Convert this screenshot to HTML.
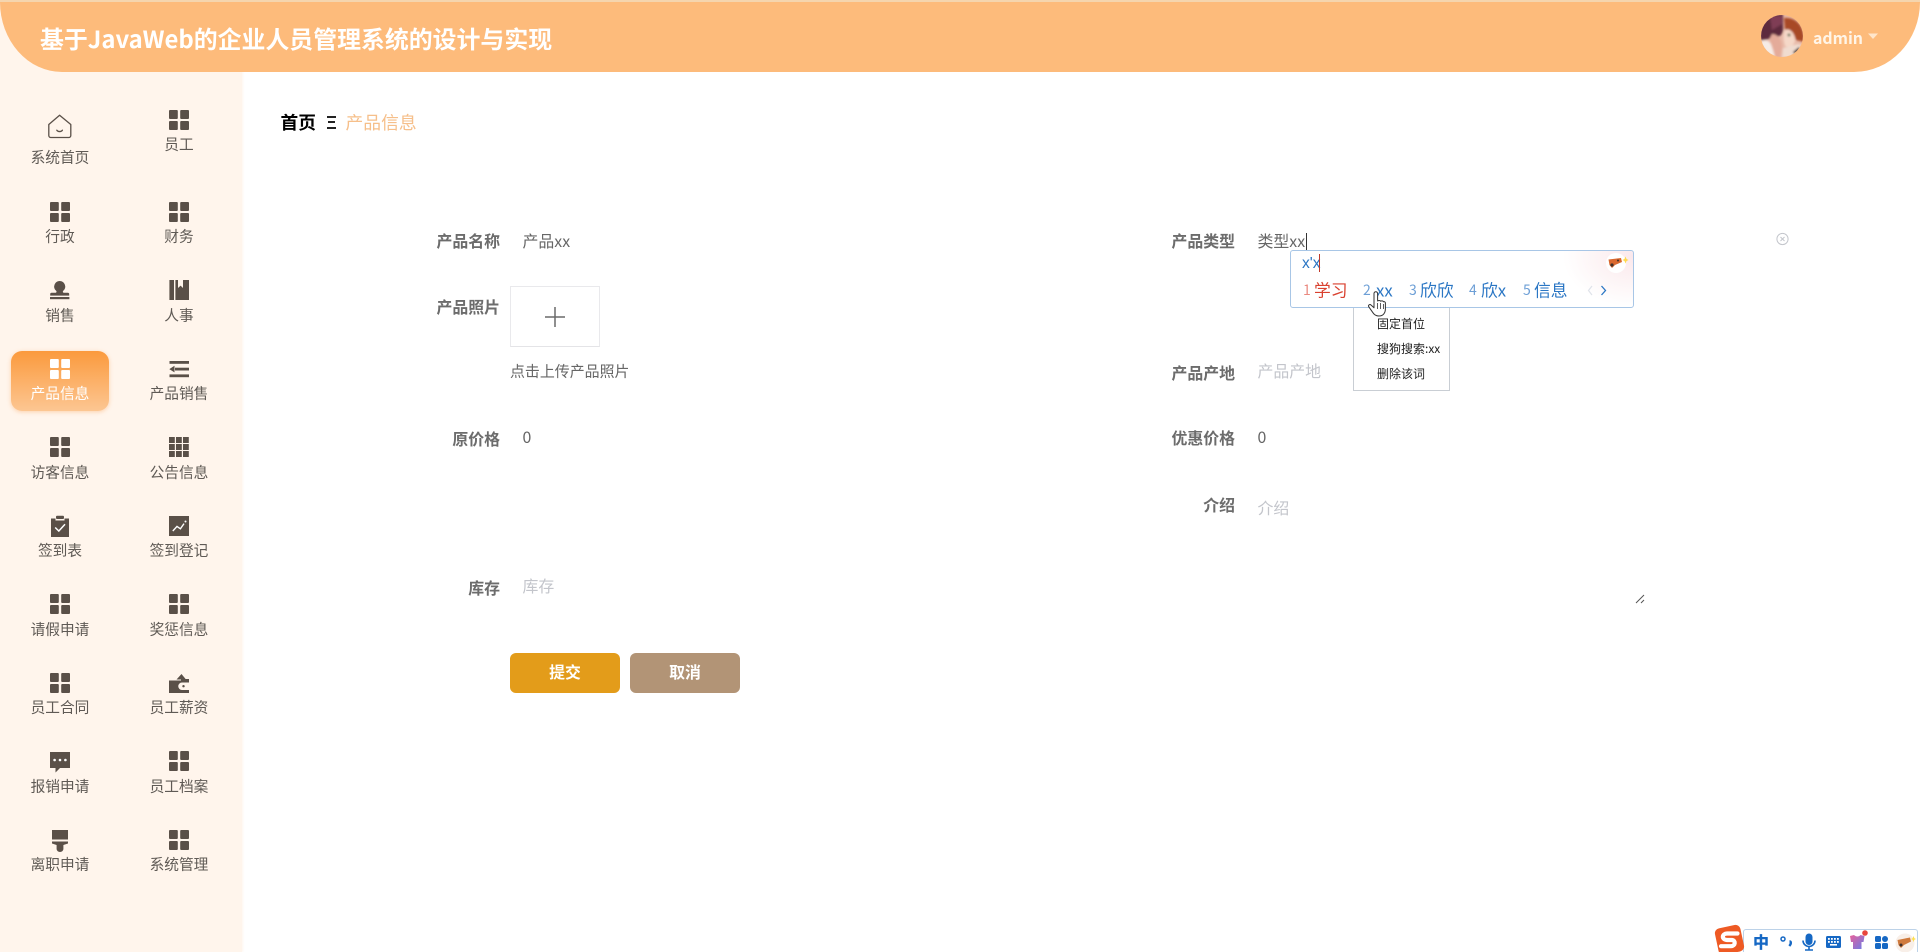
<!DOCTYPE html>
<html lang="zh-CN">
<head>
<meta charset="utf-8">
<title>产品信息</title>
<style>
html,body{margin:0;padding:0;width:1920px;height:952px;overflow:hidden;background:#fff}
body{font-family:"Noto Sans CJK SC","Liberation Sans",sans-serif}
#root{position:relative;width:1920px;height:952px;overflow:hidden;background:#fff;filter:blur(.35px)}
#root div,#root span.a{position:absolute}
.t{white-space:nowrap;line-height:1;transform:translateY(-50%)}
.c{white-space:nowrap;line-height:1;transform:translate(-50%,-50%);font-size:14.7px;color:#5f5a55}
.r{white-space:nowrap;line-height:1;transform:translateY(-50%);right:1420px;font-size:15.9px;font-weight:700;color:#6c6c6c;text-align:right}
.r2{right:685px}
.v{font-size:15.9px;color:#666}
.p{font-size:15.9px;color:#c3c5cb}
.im{font-size:16.8px;color:#2a76c4;font-family:"Noto Sans CJK SC","Liberation Sans",sans-serif}
.n{font-size:14px;color:#6d9fd6}
.m{font-size:12px;color:#222}
svg{position:absolute;left:0;top:0}
</style>
</head>
<body>
<div id="root">
  <!-- sidebar -->
  <div style="left:0;top:0;width:242px;height:952px;background:#fff5ec;box-shadow:1px 0 2px rgba(255,240,226,.6)"></div>
  <!-- header -->
  <div style="left:0;top:0;width:1920px;height:3px;background:#f5d5ae"></div>
  <div style="left:0;top:2px;width:1920px;height:70px;background:#fdbb7b;border-radius:0 0 66px 62px / 0 0 70px 70px"></div>
  <div class="t" style="left:40px;top:37.5px;font-size:23.9px;font-weight:700;color:#fff">基于JavaWeb的企业人员管理系统的设计与实现</div>
  <div class="t" style="left:1813px;top:38px;font-size:15.9px;font-weight:700;color:#fff5e8">admin</div>

  <!-- active menu -->
  <div style="left:11px;top:351px;width:98px;height:60px;border-radius:11px;background:linear-gradient(180deg,#fb9a3d 0%,#fcc692 100%);box-shadow:0 1px 4px rgba(250,165,90,.45)"></div>

  <!-- menu labels -->
  <div class="c" style="left:60px;top:158px">系统首页</div>
  <div class="c" style="left:179px;top:145px">员工</div>
  <div class="c" style="left:60px;top:237px">行政</div>
  <div class="c" style="left:179px;top:237px">财务</div>
  <div class="c" style="left:60px;top:315.5px">销售</div>
  <div class="c" style="left:179px;top:315.5px">人事</div>
  <div class="c" style="left:60px;top:394px;color:#fff">产品信息</div>
  <div class="c" style="left:179px;top:394px">产品销售</div>
  <div class="c" style="left:60px;top:472.5px">访客信息</div>
  <div class="c" style="left:179px;top:472.5px">公告信息</div>
  <div class="c" style="left:60px;top:551px">签到表</div>
  <div class="c" style="left:179px;top:551px">签到登记</div>
  <div class="c" style="left:60px;top:629.5px">请假申请</div>
  <div class="c" style="left:179px;top:629.5px">奖惩信息</div>
  <div class="c" style="left:60px;top:708px">员工合同</div>
  <div class="c" style="left:179px;top:708px">员工薪资</div>
  <div class="c" style="left:60px;top:786.5px">报销申请</div>
  <div class="c" style="left:179px;top:786.5px">员工档案</div>
  <div class="c" style="left:60px;top:865px">离职申请</div>
  <div class="c" style="left:179px;top:865px">系统管理</div>

  <!-- breadcrumb -->
  <div class="t" style="left:280.5px;top:123px;font-size:17.7px;font-weight:700;color:#000">首页</div>
  <div style="left:327px;top:116px;width:9px;height:2px;background:#222"></div>
  <div style="left:328px;top:121px;width:7px;height:2px;background:#222"></div>
  <div style="left:327px;top:127px;width:9px;height:2px;background:#222"></div>
  <div class="t" style="left:345.5px;top:123px;font-size:17.8px;color:#f6bf8a">产品信息</div>

  <!-- form left -->
  <div class="r" style="top:241px">产品名称</div>
  <div class="t v" style="left:522.5px;top:241px">产品xx</div>
  <div class="r" style="top:307px">产品照片</div>
  <div style="left:510px;top:286px;width:88px;height:59px;border:1px solid #e9e9ec;border-bottom-color:#e4e4e7;box-sizing:content-box"></div>
  <div class="t" style="left:510px;top:372px;font-size:14.95px;color:#666">点击上传产品照片</div>
  <div class="r" style="top:439px">原价格</div>
  <div class="t v" style="left:522.5px;top:437px">0</div>
  <div class="r" style="top:588px">库存</div>
  <div class="t p" style="left:522.5px;top:586px">库存</div>

  <!-- buttons -->
  <div style="left:510px;top:653px;width:110px;height:40px;border-radius:6px;background:#e39c1a"></div>
  <div style="left:630px;top:653px;width:110px;height:40px;border-radius:6px;background:#b29476"></div>
  <div class="c" style="left:565px;top:672px;font-size:15.9px;font-weight:700;color:#fff">提交</div>
  <div class="c" style="left:685px;top:672px;font-size:15.9px;font-weight:700;color:#fff">取消</div>

  <!-- form right -->
  <div class="r r2" style="top:241px">产品类型</div>
  <div class="t v" style="left:1257.5px;top:241px">类型xx</div>
  <div style="left:1306px;top:233px;width:1px;height:18px;background:#333"></div>
  <div class="r r2" style="top:373px">产品产地</div>
  <div class="t p" style="left:1257.5px;top:371px">产品产地</div>
  <div class="r r2" style="top:438px">优惠价格</div>
  <div class="t v" style="left:1257.5px;top:437px">0</div>
  <div class="r r2" style="top:505px">介绍</div>
  <div class="t p" style="left:1257.5px;top:508px">介绍</div>

  <!-- IME context menu -->
  <div style="left:1353px;top:300px;width:95px;height:89px;background:#fff;border:1px solid #c9ced4"></div>
  <div class="t m" style="left:1377px;top:324px">固定首位</div>
  <div class="t m" style="left:1377px;top:349px">搜狗搜索:xx</div>
  <div class="t m" style="left:1377px;top:374px">删除该词</div>

  <!-- IME box -->
  <div style="left:1290px;top:250px;width:342px;height:55.5px;border:1px solid #a8c6e6;border-radius:3px;background:radial-gradient(ellipse 70px 50px at 100% 10%,#fbe8ec 0%,#fdf5f6 55%,#fff 100%)"></div>
  <div class="t" style="left:1302px;top:264px;font-size:15.6px;color:#2a76c4;font-family:'Liberation Sans',sans-serif">x'x</div>
  <div style="left:1319px;top:254px;width:1px;height:18px;background:#c0392b"></div>
  <div class="t" style="left:1303px;top:290px;font-size:14px;color:#ea8a80">1</div>
  <div class="t" style="left:1314px;top:289.5px;font-size:16.8px;color:#d9412f">学习</div>
  <div class="t n" style="left:1363px;top:290px">2</div>
  <div class="t im" style="left:1376px;top:289.5px">xx</div>
  <div class="t n" style="left:1409px;top:290px">3</div>
  <div class="t im" style="left:1420px;top:289.5px">欣欣</div>
  <div class="t n" style="left:1469px;top:290px">4</div>
  <div class="t im" style="left:1481px;top:289.5px">欣x</div>
  <div class="t n" style="left:1523px;top:290px">5</div>
  <div class="t im" style="left:1534px;top:289.5px">信息</div>

  <!-- tray -->
  <div style="left:1743px;top:929px;width:175px;height:23px;background:#fff;border:1px solid #bcd2e8;border-bottom:0;border-radius:3px 3px 0 0;box-sizing:border-box"></div>
  <div class="c" style="left:1761px;top:941px;font-size:16px;font-weight:900;color:#1668c4">中</div>

  <svg width="1920" height="952" viewBox="0 0 1920 952" xmlns="http://www.w3.org/2000/svg">
    <defs>
      <g id="g4">
        <rect x="0" y="0" width="8.8" height="9" rx="1"/><rect x="11.2" y="0" width="8.8" height="9" rx="1"/>
        <rect x="0" y="11" width="8.8" height="9" rx="1"/><rect x="11.2" y="11" width="8.8" height="9" rx="1"/>
      </g>
      <clipPath id="av"><circle cx="1782" cy="36" r="21"/></clipPath>
      <clipPath id="mc"><circle cx="1616" cy="263" r="10"/></clipPath>
      <filter id="bl" x="-10%" y="-10%" width="120%" height="120%"><feGaussianBlur stdDeviation="1"/></filter>
    </defs>

    <g fill="#5a5048">
      <use href="#g4" x="169" y="110"/>
      <use href="#g4" x="50" y="202"/>
      <use href="#g4" x="169" y="202"/>
      <use href="#g4" x="50" y="437"/>
      <use href="#g4" x="50" y="594"/>
      <use href="#g4" x="169" y="594"/>
      <use href="#g4" x="50" y="673"/>
      <use href="#g4" x="169" y="751"/>
      <use href="#g4" x="169" y="830"/>
    </g>
    <use href="#g4" x="50" y="359" fill="#fff"/>

    <!-- home -->
    <path d="M48.8 124.5 59.6 115.2 70.8 124.5V135.5a2 2 0 0 1-2 2H50.8a2 2 0 0 1-2-2Z" fill="none" stroke="#5a5048" stroke-width="1.3" stroke-linejoin="round"/>
    <path d="M56.8 130.2c1 1.8 4.6 1.8 5.6 0" fill="none" stroke="#5a5048" stroke-width="1.3" stroke-linecap="round"/>

    <!-- stamp -->
    <path d="M59.7 281a5.6 5.6 0 0 0-3.6 9.8c.7.7.6 1.6-.3 2H51.6a1.4 1.4 0 0 0-1.4 1.4V295.6H69.2V294.2a1.4 1.4 0 0 0-1.4-1.4H63.6c-.9-.4-1-1.3-.3-2A5.6 5.6 0 0 0 59.7 281Z" fill="#5a5048"/>
    <rect x="50" y="297" width="19.4" height="2.2" fill="#5a5048"/>

    <!-- book -->
    <path d="M169.4 280H174V300H169.4ZM175.4 280H178V288L180.6 285.6 183 288V280H189V300H175.4Z" fill="#5a5048"/>

    <!-- indent -->
    <g fill="#5a5048">
      <rect x="169.5" y="361" width="19.5" height="2.8"/>
      <rect x="175" y="367.7" width="14" height="2.8"/>
      <rect x="169.5" y="374.4" width="19.5" height="2.8"/>
      <path d="M169.3 369.1 174.5 365.8V372.4Z"/>
    </g>

    <!-- 3x3 grid -->
    <g fill="#5a5048">
      <rect x="169" y="437" width="5.8" height="6"/><rect x="176" y="437" width="5.8" height="6"/><rect x="183" y="437" width="5.8" height="6"/>
      <rect x="169" y="444" width="5.8" height="6"/><rect x="176" y="444" width="5.8" height="6"/><rect x="183" y="444" width="5.8" height="6"/>
      <rect x="169" y="451" width="5.8" height="6"/><rect x="176" y="451" width="5.8" height="6"/><rect x="183" y="451" width="5.8" height="6"/>
    </g>

    <!-- clipboard -->
    <path d="M51 518.5H55.5V520.5H64.5V518.5H69V537H51Z" fill="#5a5048"/>
    <rect x="56" y="515.8" width="8" height="3.2" rx="1" fill="#5a5048"/>
    <path d="M55.2 527.5 58.8 531 65 524.2" fill="none" stroke="#fff" stroke-width="1.5"/>

    <!-- chart -->
    <rect x="169" y="516" width="20" height="20" fill="#5a5048"/>
    <path d="M172.8 531 177 526.4 180.4 528.8 184 523.6" fill="none" stroke="#fff" stroke-width="1.4"/>
    <circle cx="185.5" cy="521.5" r="1" fill="#fff"/>

    <!-- wallet -->
    <path d="M169 680.5H181V679H189V682.5H182A3.7 3.7 0 0 0 182 690H189V693H169Z" fill="#5a5048"/>
    <path d="M176.5 679.5 181.5 674 186 679.5Z" fill="#5a5048"/>
    <circle cx="183.5" cy="686.2" r="1.2" fill="#5a5048"/>

    <!-- chat -->
    <path d="M50 752H70V768H60L55.5 772.5V768H50Z" fill="#5a5048"/>
    <circle cx="54.6" cy="760" r="1.3" fill="#fff"/><circle cx="60" cy="760" r="1.3" fill="#fff"/><circle cx="65.4" cy="760" r="1.3" fill="#fff"/>

    <!-- brush -->
    <path d="M52 830H68V839.5H52ZM52 841.5H68V843.5L63.4 845V849a3.4 3 0 0 1-6.8 0V845L52 843.5Z" fill="#5a5048"/>

    <!-- upload plus -->
    <path d="M545 317H565M555 307V327" stroke="#6a6a6a" stroke-width="1.5" fill="none"/>

    <!-- clear icon -->
    <circle cx="1782.5" cy="239" r="5.6" fill="none" stroke="#c4c6cc" stroke-width="1"/>
    <path d="M1780.5 237 1784.5 241M1784.5 237 1780.5 241" stroke="#c4c6cc" stroke-width="1"/>

    <!-- textarea handle -->
    <path d="M1636 603 1644 595M1641 603 1644 600" stroke="#555" stroke-width="1" fill="none"/>

    <!-- header avatar -->
    <g clip-path="url(#av)">
      <rect x="1760" y="14" width="44" height="44" fill="#e8b9a8"/>
      <g filter="url(#bl)">
        <path d="M1760 14H1783V26C1784 34 1780 38 1774 36 1769 40 1763 40 1760 40Z" fill="#5d2c3e"/>
        <path d="M1770 16H1782V24L1772 30Z" fill="#7f3d55"/>
        <path d="M1784 18C1796 17 1805 26 1804 42L1796 40C1794 32 1790 28 1785 30Z" fill="#a84a25"/>
        <path d="M1785 30C1790 28 1794 33 1795 41 1793 47 1789 48 1785 46 1783 40 1783 34 1785 30Z" fill="#f5d8c8"/>
        <circle cx="1789" cy="35" r="1.4" fill="#3b5a3a"/>
        <path d="M1760 42C1768 38 1773 42 1775 58H1760Z" fill="#f6ece6"/>
        <path d="M1772 34C1778 34 1782 40 1782 48L1780 58H1775C1774 50 1770 44 1770 38Z" fill="#e4ab9a"/>
        <path d="M1783 48 1798 44 1804 46V58H1782Z" fill="#f0dcd0"/>
        <path d="M1793 52 1799 47 1801 50 1796 56Z" fill="#3a2c2a"/>
      </g>
    </g>
    <!-- dropdown -->
    <path d="M1868 33.5H1878L1873 39Z" fill="#ffe6cb"/>

    <!-- pager arrows -->
    <path d="M1592 286 1588.5 290.5 1592 295" fill="none" stroke="#dfe3ea" stroke-width="1.2"/>
    <path d="M1601.5 286 1605.5 290.5 1601.5 295" fill="none" stroke="#2a76c4" stroke-width="1.3"/>

    <!-- mascot in IME -->
    <circle cx="1616" cy="263" r="10" fill="#fff"/>
    <g clip-path="url(#mc)">
      <path d="M1608.5 259.5 1621 258 1622 262 1615 265 1612 268 1609.5 265Z" fill="#d9682f"/>
      <circle cx="1612" cy="265" r="1.6" fill="#40302a"/><circle cx="1618" cy="260.5" r="1" fill="#40302a"/>
    </g>
    <path d="M1625.5 256.5 1626.5 259 1628.5 260 1626.5 261 1625.5 263.5 1624.5 261 1622.5 260 1624.5 259Z" fill="#ffd94d"/>

    <!-- hand cursor -->
    <path d="M1374 293.5a1.8 1.8 0 0 1 3.6 0V301c1-.8 2.6-.6 3 .2 1-.6 2.4-.4 2.9.6.9-.4 1.9.2 1.9 1.3v5.6c0 4.2-2.2 7.3-6.4 7.3-2.8 0-4.4-.8-6-3.2l-4.2-6c-1-1.4.9-3.1 2.2-1.8l3 2.8Z" fill="#fff" stroke="#333" stroke-width="1" stroke-linejoin="round"/>
    <path d="M1377.6 303V309M1380.6 303V309M1383.6 304V309" stroke="#333" stroke-width=".8"/>

    <!-- sogou S logo -->
    <rect x="1716.5" y="926.5" width="26" height="27" rx="5" transform="rotate(-12 1729 940)" fill="#ee5a24"/>
    <path d="M1737.5 933.5H1727c-5 0-6 6 0 6.5h5c4 .5 3.5 6-1 6.2H1721" fill="none" stroke="#fff" stroke-width="4.2" stroke-linecap="round"/>

    <!-- punctuation -->
    <circle cx="1783" cy="939" r="2" fill="none" stroke="#1668c4" stroke-width="1.5"/>
    <path d="M1789.5 941.5c1.6 0 2 2-.2 4.5" stroke="#1668c4" stroke-width="2.4" fill="none"/>

    <!-- mic -->
    <rect x="1805.5" y="933.5" width="7" height="11.5" rx="3.5" fill="#1668c4"/>
    <path d="M1803 940.5a6 6 0 0 0 12 0M1809 946.5V950M1805 950H1813" fill="none" stroke="#1668c4" stroke-width="1.6"/>

    <!-- keyboard -->
    <rect x="1826" y="936" width="15" height="12" rx="1.5" fill="#1668c4"/>
    <g fill="#fff"><rect x="1828" y="938" width="1.8" height="1.8"/><rect x="1831" y="938" width="1.8" height="1.8"/><rect x="1834" y="938" width="1.8" height="1.8"/><rect x="1837" y="938" width="1.8" height="1.8"/><rect x="1828" y="941" width="1.8" height="1.8"/><rect x="1831" y="941" width="1.8" height="1.8"/><rect x="1834" y="941" width="1.8" height="1.8"/><rect x="1837" y="941" width="1.8" height="1.8"/><rect x="1830" y="944" width="7" height="1.6"/></g>

    <!-- shirt -->
    <defs><linearGradient id="sh" x1="0" y1="0" x2="1" y2="1"><stop offset="0" stop-color="#e8609a"/><stop offset="1" stop-color="#6a7ce8"/></linearGradient></defs>
    <path d="M1850 936 1854 935C1856 937 1859 937 1860.5 935L1864.5 936 1863.5 942H1861.5V949H1853V942H1851Z" fill="url(#sh)"/>
    <circle cx="1865" cy="933" r="2.8" fill="#e8453c"/>

    <!-- apps -->
    <g fill="#1668c4"><rect x="1875" y="936" width="6" height="6" rx="1.5"/><rect x="1882" y="936" width="6" height="6" rx="3"/><rect x="1875" y="943" width="6" height="6" rx="1.5"/><rect x="1882" y="943" width="6" height="6" rx="1.5"/></g>

    <!-- tray mascot -->
    <circle cx="1905" cy="943" r="9.5" fill="#f8efe8"/>
    <path d="M1897.5 940 1910 937.5 1911 941.5 1904 945 1901 948 1898.5 945Z" fill="#cf7a3d"/>
    <circle cx="1901" cy="945" r="1.5" fill="#40302a"/>
    <path d="M1913.5 936 1914.4 938.2 1916 939 1914.4 939.8 1913.5 942 1912.6 939.8 1911 939 1912.6 938.2Z" fill="#ffe04d"/>
  </svg>
</div>
</body>
</html>
